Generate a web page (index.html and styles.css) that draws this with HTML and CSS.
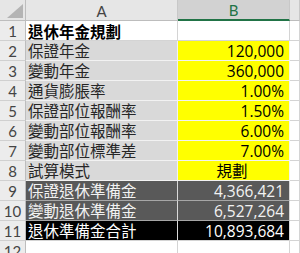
FILE: index.html
```html
<!DOCTYPE html>
<html>
<head>
<meta charset="utf-8">
<link rel="stylesheet" href="styles.css">
</head>
<body>
<div class="sheet">
  <div class="hd corner"><svg class="tri" width="16" height="14" viewBox="0 0 16 14"><polygon points="16,0 16,14 0,14" fill="#b4b4b4"/></svg></div>
  <div class="hd col">A</div>
  <div class="hd col sel">B</div>
  <div class="hd col">&nbsp;</div>

  <div class="hd row">1</div>
  <div class="c title">退休年金規劃</div>
  <div class="c"></div>
  <div class="c"></div>

  <div class="hd row">2</div>
  <div class="c lbl">保證年金</div>
  <div class="c inp num">120,000</div>
  <div class="c"></div>

  <div class="hd row">3</div>
  <div class="c lbl">變動年金</div>
  <div class="c inp num">360,000</div>
  <div class="c"></div>

  <div class="hd row">4</div>
  <div class="c lbl">通貨膨脹率</div>
  <div class="c inp num">1.00%</div>
  <div class="c"></div>

  <div class="hd row">5</div>
  <div class="c lbl">保證部位報酬率</div>
  <div class="c inp num">1.50%</div>
  <div class="c"></div>

  <div class="hd row">6</div>
  <div class="c lbl">變動部位報酬率</div>
  <div class="c inp num">6.00%</div>
  <div class="c"></div>

  <div class="hd row">7</div>
  <div class="c lbl">變動部位標準差</div>
  <div class="c inp num">7.00%</div>
  <div class="c"></div>

  <div class="hd row">8</div>
  <div class="c lbl">試算模式</div>
  <div class="c inp mid">規劃</div>
  <div class="c"></div>

  <div class="hd row">9</div>
  <div class="c dark">保證退休準備金</div>
  <div class="c dark num">4,366,421</div>
  <div class="c"></div>

  <div class="hd row">10</div>
  <div class="c dark">變動退休準備金</div>
  <div class="c dark num">6,527,264</div>
  <div class="c"></div>

  <div class="hd row">11</div>
  <div class="c black">退休準備金合計</div>
  <div class="c black num">10,893,684</div>
  <div class="c"></div>

  <div class="hd row">12</div>
  <div class="c"></div>
  <div class="c"></div>
  <div class="c"></div>
</div>
</body>
</html>
```
FILE: styles.css
```css
html, body {
  margin: 0;
  padding: 0;
  background: #ffffff;
}

.sheet {
  display: grid;
  grid-template-columns: 26px 152px 112px 1fr;
  grid-template-rows: 21px repeat(12, 20px);
  width: 300px;
  font-family: "Open Sans", "Noto Sans CJK TC", sans-serif;
  font-size: 15.5px;
  color: #000;
}

.sheet > div {
  box-sizing: border-box;
  border-right: 1px solid #d4d4d4;
  border-bottom: 1px solid #d4d4d4;
  overflow: hidden;
  white-space: nowrap;
}

.hd {
  background: #e6e6e6;
  color: #444444;
  font-family: "Lato", "Liberation Sans", sans-serif;
  font-size: 15px;
  display: flex;
  align-items: center;
  justify-content: center;
}

.sheet > .corner {
  border-right-color: #bdbdbd;
  border-bottom-color: #bdbdbd;
  position: relative;
}

.tri {
  position: absolute;
  left: 7px;
  top: 4px;
}

.sheet > .col {
  border-bottom-color: #bdbdbd;
  border-right-color: #c8c8c8;
  padding-top: 1px;
}

.sheet > .col.sel {
  background: #d2d2d2;
  color: #217346;
  border-bottom: 2px solid #217346;
}

.sheet > .row {
  border-right-color: #bdbdbd;
  border-bottom-color: #d0d0d0;
  background: #ececec;
  padding-top: 1px;
}

.c {
  display: flex;
  align-items: center;
  padding: 1px 5px 0 2px;
  line-height: 19px;
}

.title {
  font-weight: bold;
  font-family: "Noto Sans CJK TC", sans-serif;
}

.sheet > .lbl {
  background: #d9d9d9;
  color: #262626;
  border-color: #f2f2f2;
}

.sheet > .inp {
  background: #ffff00;
  border-color: #f2f2f2;
}

.num {
  justify-content: flex-end;
}

.mid {
  justify-content: center;
}

.sheet > .dark {
  background: #595959;
  color: #f2f2f2;
  border-bottom-color: #a6a6a6;
  border-right-color: #d9d9d9;
}

.sheet > .black {
  background: #000000;
  color: #ffffff;
  border-right-color: #d9d9d9;
}
```
